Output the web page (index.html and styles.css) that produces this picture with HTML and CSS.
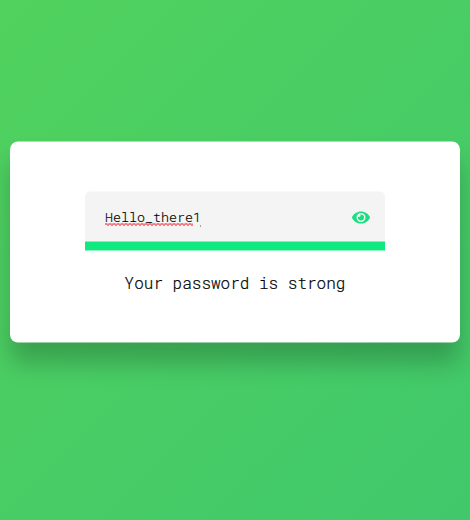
FILE: index.html
```
<!DOCTYPE html>
<html lang="en">
<head>
<meta charset="utf-8">
<title>Password strength</title>
<link rel="stylesheet" href="styles.css">
</head>
<body>
<main class="card">
  <div class="field">
    <span class="value"><span class="misspelled">Hello_there</span>1</span>
    <svg class="eye" viewBox="0 0 576 512"><path d="M572.52 241.4C518.29 135.59 410.93 64 288 64S57.68 135.64 3.48 241.41a32.35 32.35 0 0 0 0 29.19C57.71 376.41 165.07 448 288 448s230.32-71.64 284.52-177.41a32.35 32.35 0 0 0 0-29.19zM288 400a144 144 0 1 1 144-144 143.93 143.93 0 0 1-144 144zm0-240a95.31 95.31 0 0 0-25.31 3.79 47.85 47.85 0 0 1-66.9 66.9A95.78 95.78 0 1 0 288 160z"/></svg>
  </div>
  <div class="strength"></div>
  <p class="message">Your password is strong</p>
</main>
</body>
</html>
```
FILE: styles.css
```
* { box-sizing: border-box; margin: 0; padding: 0; }
body {
  height: 520px;
  padding: 141px 10px 0;
  overflow: hidden;
  background: linear-gradient(135deg, #51d25e, #40c86b);
  font-family: "Roboto Mono", "Noto Sans Mono", "DejaVu Sans Mono", monospace;
  font-weight: 300;
}
.card {
  height: 201px;
  padding: 50px 75px 0;
  border-radius: 8px;
  background: #fff;
  box-shadow: 0 20px 25px rgba(0, 0, 0, 0.22);
  transform: translateY(0.5px);
}
.field {
  display: flex;
  align-items: center;
  justify-content: space-between;
  height: 50px;
  padding: 0 15px 0 20px;
  border-radius: 5px 5px 0 0;
  background: #f4f4f4;
}
.value {
  position: relative;
  font-size: 13.33px;
  color: #000;
  -webkit-text-stroke: 0.15px #000;
}
.value::after {
  content: "";
  position: absolute;
  right: 0;
  bottom: -1px;
  width: 1px;
  height: 1px;
  background: #555;
}
.misspelled { position: relative; }
.misspelled::after {
  content: "";
  position: absolute;
  left: 0;
  right: 0;
  bottom: 0;
  height: 2px;
  background:
    repeating-linear-gradient(90deg, #f0101c 0 2px, #f67a80 2px 4px) 0 0 / 100% 1px no-repeat,
    repeating-linear-gradient(90deg, transparent 0 2px, #f0101c 2px 4px) 0 1px / 100% 1px no-repeat;
}
.eye { width: 18px; height: 16px; margin-top: 1px; fill: #18e080; }
.strength { height: 9px; background: #10e880; }
.message {
  margin-top: 21px;
  font-size: 16px;
  line-height: 21px;
  text-align: center;
  color: #000;
  -webkit-text-stroke: 0.2px #000;
}
```
